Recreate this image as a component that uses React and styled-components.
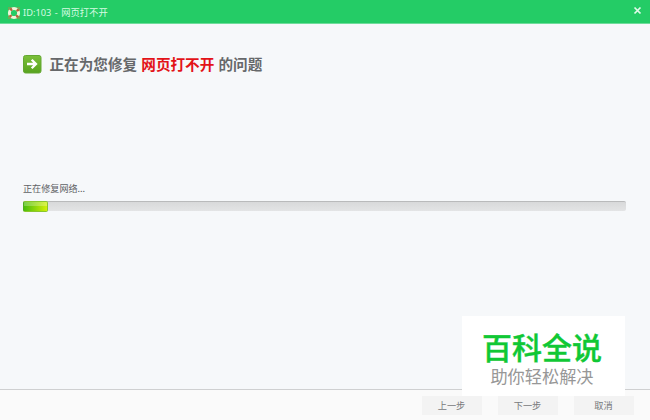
import React from 'react';
import styled, { createGlobalStyle } from 'styled-components';

const GlobalStyle = createGlobalStyle`
  * {
    box-sizing: border-box;
  }

  body {
    margin: 0;
    overflow: hidden;
    font-family: "Noto Sans CJK SC", sans-serif;
  }
`;

//styled-components
const Window = styled.div`
  position: relative;
  display: flex;
  flex-direction: column;
  width: 650px;
  height: 420px;
  background: #f6f8fa;
`;

const TitleBar = styled.header`
  display: flex;
  align-items: center;
  flex: none;
  height: 24px;
  padding: 2px 8px 0 7px;
  background: #24cc66;
  border-bottom: 1px solid #6fdc9b;
`;

const Title = styled.h1`
  flex: 1;
  margin: 0 0 0 2px;
  color: #d6fbe2;
  font-family: "Noto Sans", "Noto Sans CJK SC", sans-serif;
  font-size: 9.3px;
  font-weight: 400;
  line-height: 15px;
  white-space: nowrap;
  word-spacing: 1px;
`;

const CloseButton = styled.button`
  display: flex;
  margin: 0 0 4px;
  padding: 0;
  border: 0;
  background: none;
`;

const Content = styled.main`
  flex: 1;
  padding: 30px 24px 0 23px;
`;

const Heading = styled.h2`
  display: flex;
  align-items: center;
  height: 20px;
  margin: 0;
  color: #66686a;
  font-size: 14.6px;
  font-weight: 700;
  line-height: 20px;
  white-space: pre;
  word-spacing: 0.9px;

  svg {
    margin-right: 7.5px;
  }
`;

const Problem = styled.span`
  color: #e31318;
`;

const Status = styled.p`
  margin: 107px 0 5px;
  color: #5f6265;
  font-size: 9.1px;
  line-height: 15px;
`;

const Track = styled.div`
  height: 10px;
  border-top: 1px solid #b9babb;
  border-radius: 2px;
  background: linear-gradient(#d8d9da, #e3e4e5);
`;

const Bar = styled.div`
  width: 25px;
  height: 11px;
  margin-top: -1px;
  border: 1px solid #8ac62c;
  border-left-color: #4fae1c;
  border-radius: 2px;
  background:
    linear-gradient(rgba(255, 255, 255, 0.25) 45%, rgba(255, 255, 255, 0) 50%),
    linear-gradient(90deg, #4bbd0c, #d2f008);
`;

const Footer = styled.footer`
  display: flex;
  flex: none;
  justify-content: flex-end;
  gap: 16px;
  height: 31px;
  padding: 6px 16px 0 0;
  border-top: 1px solid #cfd0d1;
  background: #fafafa;
`;

const Button = styled.button`
  width: 60px;
  height: 19px;
  padding: 0 1px 1px 0;
  border: 0;
  background: #f3f3f3;
  color: #77797b;
  font-family: inherit;
  font-size: 9.2px;
  line-height: 18px;
`;

//lies over the content and the footer
const Badge = styled.aside`
  position: absolute;
  top: 316px;
  left: 462px;
  width: 163px;
  height: 80px;
  padding-top: 10px;
  background: #fff;
  text-align: center;
  white-space: nowrap;
`;

const BadgeName = styled.div`
  padding-right: 3px;
  color: #10c835;
  font-size: 30px;
  font-weight: 500;
  line-height: 41px;
  -webkit-text-stroke: 0.4px #10c835;
`;

const BadgeSlogan = styled.div`
  padding-right: 3px;
  color: #979797;
  font-size: 17.2px;
  font-weight: 400;
  line-height: 18px;
`;

const LifebuoyIcon = () => (
  <svg width="14" height="14" viewBox="0 0 14 14">
    <circle cx="7" cy="7" r="4.6" fill="none" stroke="#f0f3d8" strokeWidth="3" />
    <circle
      cx="7"
      cy="7"
      r="4.6"
      fill="none"
      stroke="#b5663e"
      strokeWidth="3"
      strokeDasharray="2.2 5.03"
      strokeDashoffset="-2.5"
    />
    <path d="M1.5 4V1.5H4M10 1.5h2.5V4M12.5 10v2.5H10M4 12.5H1.5V10" fill="none" stroke="#8a9c4c" strokeWidth=".8" />
  </svg>
);

const ArrowIcon = () => (
  <svg width="19" height="19" viewBox="0 0 19 19">
    <defs>
      <linearGradient id="arrowFill" x2="0" y2="1">
        <stop stopColor="#7cc03a" />
        <stop offset="1" stopColor="#58a31f" />
      </linearGradient>
    </defs>
    <rect x=".5" y=".5" width="17.5" height="17.5" rx="2" fill="url(#arrowFill)" stroke="#64a832" />
    <path d="M4 9h8.5M8.7 4.7L13 9l-4.3 4.3" fill="none" stroke="#fff" strokeWidth="2.3" />
  </svg>
);

const CloseIcon = () => (
  <svg width="9" height="9" viewBox="0 0 9 9">
    <path d="M1.5 1.5l6 6M7.5 1.5l-6 6" stroke="#e2fbea" strokeWidth="1.7" />
  </svg>
);

//exported component
const App = () => (
  <>
    <GlobalStyle />
    <Window>
      <TitleBar>
        <LifebuoyIcon />
        <Title>ID:103 - 网页打不开</Title>
        <CloseButton aria-label="关闭">
          <CloseIcon />
        </CloseButton>
      </TitleBar>
      <Content>
        <Heading>
          <ArrowIcon />
          正在为您修复 <Problem>网页打不开</Problem> 的问题
        </Heading>
        <Status>正在修复网络...</Status>
        <Track>
          <Bar />
        </Track>
      </Content>
      <Footer>
        <Button>上一步</Button>
        <Button>下一步</Button>
        <Button>取消</Button>
      </Footer>
      <Badge>
        <BadgeName>百科全说</BadgeName>
        <BadgeSlogan>助你轻松解决</BadgeSlogan>
      </Badge>
    </Window>
  </>
);

export default App;
